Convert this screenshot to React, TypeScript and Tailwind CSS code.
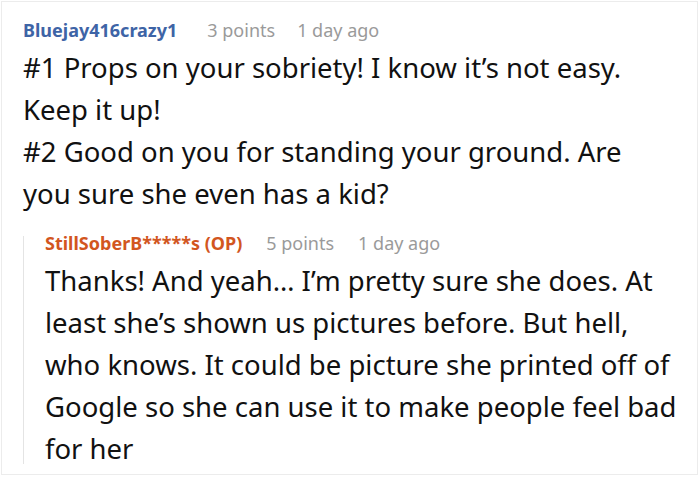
const meta = "text-[18px] text-[#9a9a9a]";

export default function App() {
  return (
    <div className="w-[700px] h-[478px] bg-white p-[1px] font-['Noto_Sans',sans-serif]">
      <div className="h-[474px] w-[697px] border border-[#ececec] pl-[21px] pt-[15px]">
        <div className="flex items-baseline gap-[30px] leading-[26px]">
          <span className="text-[18px] font-bold text-[#3e64a6]">Bluejay416crazy1</span>
          <span className={meta}>3 points</span>
          <span className={meta + " -ml-[8px]"}>1 day ago</span>
        </div>
        <p className="mt-[4px] whitespace-nowrap text-[27.5px] leading-[42px] text-[#111]">
          #1 Props on your sobriety! I know it’s not easy.
          <br />
          Keep it up!
          <br />
          #2 Good on you for standing your ground. Are
          <br />
          you sure she even has a kid?
        </p>
        <div className="mt-[21px] h-[228px] border-l-[1.5px] border-[#e4e4e4] pl-[21px]">
          <div className="flex items-baseline gap-[24px] leading-[14px]">
            <span className="text-[18px] font-bold text-[#d2561f]">StillSoberB*****s (OP)</span>
            <span className={meta}>5 points</span>
            <span className={meta}>1 day ago</span>
          </div>
          <p className="mt-[10px] whitespace-nowrap text-[27.5px] leading-[42px] text-[#111]">
            Thanks! And yeah… I’m pretty sure she does. At
            <br />
            least she’s shown us pictures before. But hell,
            <br />
            who knows. It could be picture she printed off of
            <br />
            Google so she can use it to make people feel bad
            <br />
            for her
          </p>
        </div>
      </div>
    </div>
  );
}
